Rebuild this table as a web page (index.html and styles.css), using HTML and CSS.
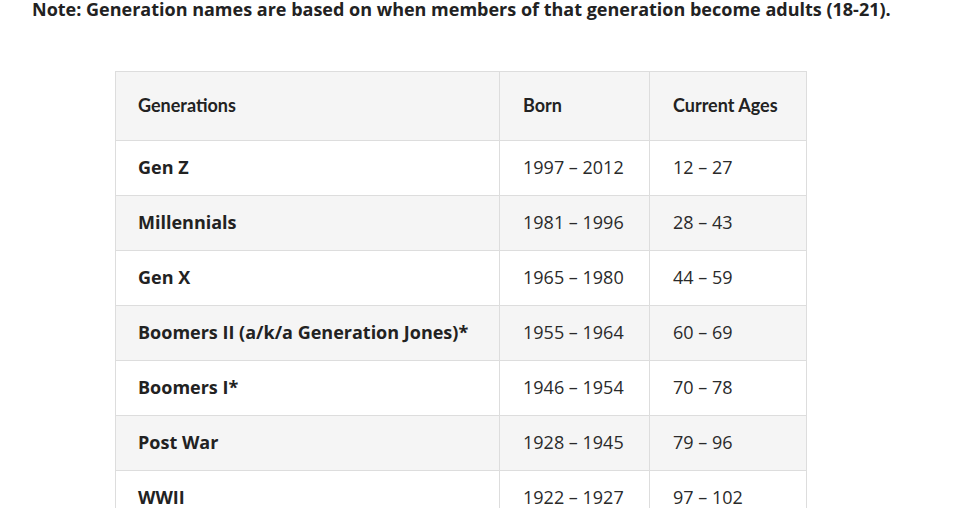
FILE: index.html
```html
<!DOCTYPE html>
<html lang="en">
<head>
<meta charset="utf-8">
<title>Generations</title>
<link rel="stylesheet" href="styles.css">
</head>
<body>
<p class="note">Note: Generation names are based on when members of that generation become adults (18-21).</p>
<table class="gen-table">
  <thead>
    <tr><th class="c1">Generations</th><th class="c2">Born</th><th class="c3">Current Ages</th></tr>
  </thead>
  <tbody>
    <tr><td class="name">Gen Z</td><td>1997 – 2012</td><td>12 – 27</td></tr>
    <tr><td class="name">Millennials</td><td>1981 – 1996</td><td>28 – 43</td></tr>
    <tr><td class="name">Gen X</td><td>1965 – 1980</td><td>44 – 59</td></tr>
    <tr><td class="name">Boomers II (a/k/a Generation Jones)*</td><td>1955 – 1964</td><td>60 – 69</td></tr>
    <tr><td class="name">Boomers I*</td><td>1946 – 1954</td><td>70 – 78</td></tr>
    <tr><td class="name">Post War</td><td>1928 – 1945</td><td>79 – 96</td></tr>
    <tr><td class="name">WWII</td><td>1922 – 1927</td><td>97 – 102</td></tr>
  </tbody>
</table>
</body>
</html>
```

FILE: styles.css
```css
html, body {
  margin: 0;
  padding: 0;
  background: #ffffff;
}
body {
  font-family: "Open Sans", "Liberation Sans", sans-serif;
  color: #222222;
  overflow: hidden;
}
.note {
  margin: 0;
  padding: 0 0 0 32px;
  font-size: 18px;
  font-weight: 700;
  line-height: 18px;
  white-space: nowrap;
}
.gen-table {
  margin: 53px 0 0 115px;
  border-collapse: collapse;
  table-layout: fixed;
  width: 691px;
  font-size: 18px;
}
.gen-table th,
.gen-table td {
  border: 1px solid #dddddd;
  text-align: left;
  padding: 0 22px 2px 22px;
  vertical-align: middle;
}
.gen-table th {
  font-family: Lato, "Open Sans", sans-serif;
  font-weight: 700;
  height: 66px;
  background: #f5f5f5;
  color: #222222;
}
.gen-table td {
  height: 52px;
  color: #2a2a2a;
}
.gen-table td.name {
  font-weight: 700;
  color: #222222;
}
.gen-table .c2,
.gen-table .c3,
.gen-table td:nth-child(2),
.gen-table td:nth-child(3) {
  padding-left: 23px;
  padding-right: 21px;
}
.gen-table tbody tr:nth-child(even) td {
  background: #f5f5f5;
}
.c1 { width: 339px; }
.c2 { width: 105px; }
.c3 { width: 112px; }
```
